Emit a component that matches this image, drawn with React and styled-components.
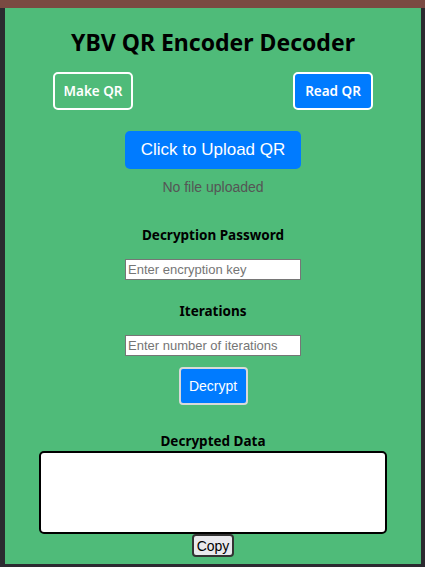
import styled, { createGlobalStyle } from 'styled-components';

const GlobalStyle = createGlobalStyle`
    html, body {
        margin: 0;
        padding: 0;
        background: #2b2a30;
    }
`;

export default function App () {

    return (
        <>
            <GlobalStyle />
            <Frame>
                <Popup>
                    <Title>YBV QR Encoder Decoder</Title>
                    <ModeRow>
                        <ModeButton>Make QR</ModeButton>
                        <ModeButton active>Read QR</ModeButton>
                    </ModeRow>
                    <UploadButton>Click to Upload QR</UploadButton>
                    <FileStatus>No file uploaded</FileStatus>
                    <Label top={30}>Decryption Password</Label>
                    <TextInput type="password" placeholder="Enter encryption key" />
                    <Label top={22}>Iterations</Label>
                    <TextInput type="text" placeholder="Enter number of iterations" />
                    <DecryptButton>Decrypt</DecryptButton>
                    <Label top={27} tight>Decrypted Data</Label>
                    <Output readOnly />
                    <CopyButton>Copy</CopyButton>
                </Popup>
            </Frame>
        </>
    );

}

const Frame = styled.div`

    min-height: 567px;
    box-sizing: border-box;
    padding: 8px 4px 3px 5px;
    background: linear-gradient(#7a4a42 0, #7a4a42 8px, #2b2a30 8px);

`;

const Popup = styled.div`

    height: 556px;
    box-sizing: border-box;
    background: #4fbb79;
    display: flex;
    flex-direction: column;
    align-items: center;
    padding-top: 20px;

`;

const Title = styled.h1`

    margin: 0;
    font-family: 'Noto Sans', sans-serif;
    font-weight: 700;
    font-size: 23px;
    line-height: 28px;
    color: #000000;

`;

const ModeRow = styled.div`

    margin-top: 16px;
    width: 320px;
    display: flex;
    justify-content: space-between;

`;

const ModeButton = styled.button`

    width: 80px;
    height: 38px;
    box-sizing: border-box;
    border: 2px solid #ffffff;
    border-radius: 5px;
    background: ${props => props.active ? '#007bff' : 'transparent'};
    color: #ffffff;
    font-family: 'Noto Sans', sans-serif;
    font-weight: 600;
    font-size: 13.5px;
    padding: 0;

`;

const UploadButton = styled.button`

    margin-top: 21px;
    width: 176px;
    height: 38px;
    border: none;
    border-radius: 5px;
    background: #007bff;
    color: #ffffff;
    font-family: 'Liberation Sans', Arial, sans-serif;
    font-size: 17px;
    padding: 0;

`;

const FileStatus = styled.p`

    margin: 9px 0 0;
    font-family: 'Liberation Sans', Arial, sans-serif;
    font-size: 14px;
    line-height: 18px;
    color: #555555;

`;

const Label = styled.h3`

    margin: ${props => props.top}px 0 ${props => props.tight ? 1 : 15}px;
    font-family: 'Noto Sans', sans-serif;
    font-weight: 700;
    font-size: 13.5px;
    line-height: 18px;
    color: #000000;

`;

const TextInput = styled.input`

    width: 176px;
    height: 21px;
    box-sizing: border-box;
    border: 1px solid #767676;
    padding: 1px 2px;
    background: #ffffff;
    font-family: 'Liberation Sans', Arial, sans-serif;
    font-size: 13px;

    &::placeholder {
        color: #757575;
    }

`;

const DecryptButton = styled.button`

    margin-top: 11px;
    width: 69px;
    height: 38px;
    box-sizing: border-box;
    border: 2px solid #d9d9d9;
    border-radius: 4px;
    background: #007bff;
    color: #ffffff;
    font-family: 'Liberation Sans', Arial, sans-serif;
    font-size: 14px;
    padding: 0;

`;

const Output = styled.textarea`

    width: 348px;
    height: 83px;
    box-sizing: border-box;
    border: 2px solid #000000;
    border-radius: 5px;
    background: #ffffff;
    resize: none;

`;

const CopyButton = styled.button`

    margin-top: 0;
    width: 42px;
    height: 23px;
    box-sizing: border-box;
    border: 2px solid #333333;
    border-radius: 4px;
    background: #e9e9ed;
    color: #000000;
    font-family: 'Liberation Sans', Arial, sans-serif;
    font-size: 14px;
    padding: 0;

`;
